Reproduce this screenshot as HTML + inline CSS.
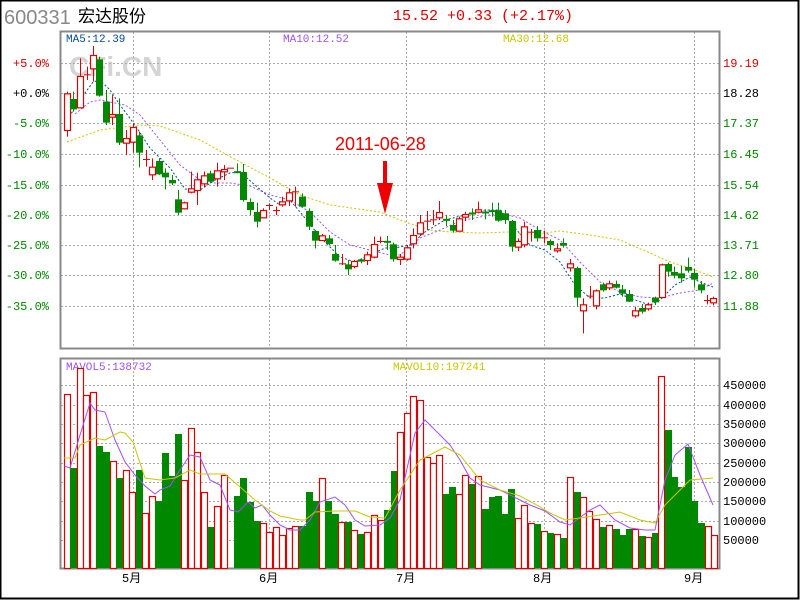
<!DOCTYPE html>
<html><head><meta charset="utf-8">
<style>
body{margin:0;background:#fff;width:800px;height:600px;overflow:hidden}
svg{display:block}
text{font-family:"Liberation Mono","WenQuanYi Zen Hei",monospace}
</style></head><body>
<svg id="s" width="800" height="600" xmlns="http://www.w3.org/2000/svg">
<rect x="0.5" y="0.5" width="798" height="598" fill="#fff" stroke="#000" stroke-width="2"/>
<text x="4" y="24" font-size="20" fill="#888" style="font-family:'Liberation Sans',sans-serif">600331</text>
<text x="78" y="22" font-size="17" fill="#000" style="font-family:'Liberation Sans','WenQuanYi Zen Hei',sans-serif">宏达股份</text>
<text x="393" y="20" font-size="15" fill="#d00">15.52 +0.33 (+2.17%)</text>
<text x="69" y="76" font-size="28" font-weight="bold" fill="#d4d4d4" style="font-family:'Liberation Sans',sans-serif">CFi.CN</text>
<g id="grid" stroke="#aaa" stroke-dasharray="2,2" stroke-width="1"></g>
<rect x="60.5" y="31.5" width="659" height="317" fill="none" stroke="#888" stroke-width="2"/>
<rect x="60.5" y="358.5" width="659" height="210" fill="none" stroke="#888" stroke-width="2"/>
<text x="66" y="42" font-size="11" fill="#004c99">MA5:12.39</text>
<text x="283" y="42" font-size="11" fill="#a050ff">MA10:12.52</text>
<text x="503" y="42" font-size="11" fill="#c8c800">MA30:12.68</text>
<text x="66" y="370" font-size="11" fill="#a050ff">MAVOL5:138732</text>
<text x="393" y="370" font-size="11" fill="#c8c800">MAVOL10:197241</text>
<g id="lab" font-size="12"></g>
<g id="lines" fill="none"></g>
<g id="c"></g>
<text x="335" y="150" font-size="18" fill="#e00" style="font-family:'Liberation Sans',sans-serif">2011-06-28</text>
<rect x="383" y="161" width="4" height="28" fill="#e00"/>
<polygon points="377,183 393,183 385,214" fill="#e00"/>
</svg>
<script>
var S=document.getElementById('s'),NS='http://www.w3.org/2000/svg';
function el(p,t,a,tx){var e=document.createElementNS(NS,t);for(var k in a)e.setAttribute(k,a[k]);if(tx)e.textContent=tx;document.getElementById(p).appendChild(e);}
[63,93,123,154,185,215,245,275,306].forEach(function(y){el('grid','line',{x1:61,x2:719,y1:y+.5,y2:y+.5});});
[385,405,424,443,463,482,501,521,540].forEach(function(y){el('grid','line',{x1:61,x2:719,y1:y+.5,y2:y+.5});});
[133,269,406,544,694].forEach(function(x){el('grid','line',{x1:x+.5,x2:x+.5,y1:32,y2:348});el('grid','line',{x1:x+.5,x2:x+.5,y1:359,y2:568});});
var pl=['+5.0%','+0.0%','-5.0%','-10.0%','-15.0%','-20.0%','-25.0%','-30.0%','-35.0%'],pr=['19.19','18.28','17.37','16.45','15.54','14.62','13.71','12.80','11.88'],py=[63,93,123,154,185,215,245,275,306];
for(var i=0;i<9;i++){var col=i==0?'#d00':i==1?'#000':'#080';el('lab','text',{x:49,y:py[i]+4,'text-anchor':'end',fill:col},pl[i]);el('lab','text',{x:723,y:py[i]+4,fill:col},pr[i]);}
var vl=['450000','400000','350000','300000','250000','200000','150000','100000','50000'],vy=[385,405,424,443,463,482,501,521,540];
for(i=0;i<9;i++)el('lab','text',{x:723,y:vy[i]+4,fill:'#000'},vl[i]);
[['5月',122],['6月',259],['7月',396],['8月',533],['9月',684]].forEach(function(m){el('lab','text',{x:m[1],y:582,fill:'#000'},m[0]);});
function pl_(pts,c,d){el('lines','polyline',{points:pts.map(function(p){return p.join(',')}).join(' '),stroke:c,'stroke-width':1,'stroke-dasharray':d||'none'});}
pl_([[67,142],[100,130],[140,125],[160,126],[200,140],[240,162],[270,178],[300,195],[330,205],[380,212],[405,222],[430,230],[450,232],[480,233],[510,232],[530,235],[560,231],[590,235],[620,240],[650,253],[670,262],[690,268],[713,277]],'#c8c800','2,2');
pl_([[75,114],[90,102],[100,100],[125,105],[140,115],[160,140],[180,165],[200,180],[215,183],[230,183],[250,186],[270,195],[290,200],[310,212],[330,232],[350,245],[370,250],[390,255],[400,255],[420,238],[440,230],[460,221],[480,217],[500,213],[520,218],[540,230],[560,240],[580,262],[600,282],[620,292],[640,297],[660,298],[680,293],[700,290],[713,283]],'#a050ff','2,2');
pl_([[67,120],[80,100],[93,82],[100,80],[110,90],[120,105],[135,125],[150,148],[170,168],[185,189],[200,190],[215,180],[230,173],[240,172],[255,185],[270,198],[280,205],[290,200],[305,218],[320,237],[340,257],[355,262],[370,255],[385,248],[395,248],[410,245],[425,232],[445,220],[465,215],[485,210],[500,210],[515,228],[530,245],[545,250],[560,262],[575,285],[590,298],[605,298],[620,294],[635,300],[650,305],[660,300],[675,285],[690,277],[700,282],[713,287]],'#004c99','2,2');
var A=[[20,190,300,185,320,'r'],[40,207,238,185,245,'g'],[60,138,232,85,235,'r'],[80,133,133,110,150,'r'],[98,75,115,48,155,'r'],[118,88,197,80,200,'g'],[138,215,278,180,285,'g'],[157,252,260,195,285,'r'],[178,252,338,205,345,'g'],[198,324,338,300,375,'r'],[218,291,335,280,368,'r'],[236,316,368,305,412,'g'],[257,387,387,360,410,'r'],[276,410,433,385,450,'r'],[296,393,433,385,435,'g'],[315,428,442,415,478,'g'],[335,450,460,435,465,'g'],[354,508,548,480,555,'g'],[373,517,535,515,538,'r'],[393,475,485,425,490,'r'],[412,448,480,428,525,'r'],[432,436,460,425,470,'r'],[451,430,455,422,460,'g'],[472,421,445,398,470,'r'],[491,417,424,405,450,'r'],[511,413,413,413,413,'r'],[531,425,428,400,430,'g'],[550,426,510,402,515,'g'],[570,516,540,505,555,'g'],[590,546,575,518,592,'g'],[608,540,562,535,565,'r'],[628,525,530,520,540,'r'],[648,540,544,530,555,'r'],[667,514,523,500,530,'r'],[687,487,511,475,528,'r'],[706,484,484,470,530,'r'],[726,500,530,490,532,'g'],[746,543,590,535,600,'g'],[766,603,632,600,655,'g'],[786,616,630,612,632,'r'],[806,625,642,615,645,'g'],[825,672,692,645,695,'g'],[845,700,700,672,705,'r'],[864,703,718,690,735,'g'],[883,693,708,690,715,'r'],[902,688,695,685,700,'g'],[922,673,690,665,705,'r'],[941,642,680,620,685,'r'],[961,633,638,620,640,'r']];
var B=[[20,274,277,258,300,'g'],[40,283,328,278,335,'g'],[60,320,327,312,345,'r'],[80,292,326,285,332,'r'],[100,255,280,235,295,'r'],[120,217,250,195,258,'r'],[140,212,212,183,240,'r'],[160,208,208,180,225,'r'],[178,186,202,153,210,'r'],[198,208,213,195,228,'g'],[218,225,242,210,248,'g'],[236,205,242,200,244,'r'],[256,192,200,185,213,'r'],[276,189,191,175,210,'g'],[295,178,185,155,190,'r'],[315,186,190,178,208,'g'],[335,182,185,158,200,'g'],[355,181,212,158,215,'g'],[374,190,210,180,222,'g'],[395,213,290,210,305,'g'],[413,273,290,265,303,'r'],[433,229,283,215,292,'r'],[452,245,245,237,275,'r'],[472,240,265,228,275,'g'],[492,262,262,242,280,'r'],[511,273,285,268,300,'g'],[530,295,301,280,308,'r'],[550,279,287,265,293,'g'],[570,340,352,327,365,'r'],[590,354,443,350,470,'g'],[610,463,481,445,550,'r'],[630,437,437,408,445,'r'],[648,421,466,418,478,'r'],[668,403,421,398,425,'g'],[688,400,412,392,420,'r'],[707,402,413,392,415,'g'],[727,418,431,405,440,'g'],[747,432,455,420,456,'g'],[766,481,496,470,503,'r'],[786,474,485,462,491,'g'],[805,463,475,458,482,'r'],[825,443,457,440,465,'g'],[845,343,441,341,443,'r'],[863,342,365,338,380,'g'],[883,366,377,350,385,'g'],[903,370,385,348,398,'g'],[923,351,362,323,368,'g'],[943,369,389,357,413,'g'],[962,403,421,393,430,'g'],[982,450,450,435,463,'r'],[1000,444,457,440,466,'r']];
function cand(x,t,b,h,l,c){var col=c=='r'?'#d00':'#080';x=Math.round(x);
 el('c','line',{x1:x+.5,x2:x+.5,y1:h,y2:l,stroke:col,'stroke-width':1});
 if(b-t<2){el('c','line',{x1:x-3,x2:x+4,y1:t+.5,y2:t+.5,stroke:col,'stroke-width':c=='r'?1:2});return;}
 if(c=='r')el('c','rect',{x:x-2.5,y:t+.5,width:6,height:b-t,fill:'#fff',stroke:col,'stroke-width':1.2});
 else el('c','rect',{x:x-3,y:t,width:7,height:b-t,fill:col});}
A.forEach(function(a){cand(a[0]/3+60,a[1]/3+30,a[2]/3+30,a[3]/3+30,a[4]/3+30,a[5]);});
B.forEach(function(a){cand(a[0]/3+380,a[1]/3+150,a[2]/3+150,a[3]/3+150,a[4]/3+150,a[5]);});
var V=[[67,394,'r'],[73,468,'g'],[80,368,'r'],[86,395,'r'],[93,392,'r'],[99,446,'g'],[106,452,'g'],[113,461,'r'],[119,478,'g'],[126,470,'r'],[132,492,'r'],[139,470,'g'],[145,513,'r'],[152,496,'r'],[158,501,'g'],[165,453,'g'],[171,476,'g'],[178,434,'g'],[184,480,'r'],[191,428,'r'],[197,452,'r'],[204,492,'r'],[211,527,'g'],[217,506,'r'],[224,475,'r'],[237,496,'g'],[243,478,'g'],[250,502,'g'],[257,521,'g'],[263,523,'r'],[269,532,'r'],[276,527,'r'],[282,535,'r'],[289,528,'r'],[295,526,'r'],[302,526,'g'],[309,492,'g'],[315,501,'g'],[322,478,'r'],[328,501,'g'],[335,514,'g'],[341,522,'r'],[348,522,'g'],[354,530,'r'],[361,534,'g'],[367,532,'r'],[374,515,'r'],[381,520,'r'],[387,510,'g'],[394,471,'g'],[400,432,'r'],[407,413,'r'],[413,396,'r'],[420,400,'r'],[427,457,'r'],[433,463,'r'],[439,455,'r'],[446,494,'g'],[452,487,'g'],[459,494,'r'],[465,475,'r'],[472,484,'g'],[478,476,'r'],[485,509,'g'],[492,497,'g'],[498,496,'g'],[505,514,'g'],[511,489,'g'],[518,518,'r'],[524,505,'r'],[531,523,'r'],[537,524,'g'],[544,531,'r'],[550,533,'g'],[557,534,'r'],[563,538,'g'],[570,477,'r'],[577,492,'g'],[583,497,'r'],[589,511,'r'],[596,519,'r'],[603,527,'g'],[609,525,'r'],[616,529,'g'],[622,535,'g'],[629,529,'g'],[635,529,'r'],[642,536,'g'],[648,537,'r'],[655,533,'g'],[661,376,'r'],[668,430,'g'],[674,477,'g'],[681,487,'g'],[688,447,'g'],[694,501,'g'],[701,523,'g'],[708,526,'r'],[714,535,'r']];
V.forEach(function(v){var x=v[0];if(v[2]=='r')el('c','rect',{x:x-2.5,y:v[1]+.5,width:6,height:568-v[1],fill:'#fff',stroke:'#d00','stroke-width':1.2});else el('c','rect',{x:x-3,y:v[1],width:7,height:568-v[1],fill:'#080'});});
function vl_(pts,c){el('c','polyline',{points:pts.map(function(p){return p.join(',')}).join(' '),stroke:c,fill:'none','stroke-width':1});}
vl_([[64,466],[70,468],[80,435],[90,403],[95,410],[105,412],[115,440],[125,462],[135,475],[145,486],[155,494],[160,490],[170,486],[180,470],[190,455],[200,457],[210,480],[220,485],[230,510],[238,512],[248,502],[255,508],[262,505],[270,515],[280,525],[290,530],[300,530],[310,520],[320,502],[335,497],[345,505],[355,520],[365,526],[380,525],[390,518],[400,500],[415,433],[425,420],[440,435],[450,445],[460,460],[470,478],[480,485],[500,490],[520,500],[530,505],[545,511],[560,522],[570,525],[590,510],[600,505],[615,520],[630,528],[645,530],[655,530],[665,480],[675,455],[688,444],[700,475],[713,505]],'#a050ff');
vl_([[64,458],[75,458],[80,445],[95,438],[105,440],[120,432],[125,433],[133,442],[145,478],[160,480],[175,478],[190,470],[200,474],[215,474],[225,474],[240,487],[255,500],[270,511],[280,516],[290,518],[300,520],[305,520],[315,512],[335,511],[355,511],[370,517],[385,518],[400,490],[420,460],[445,447],[460,455],[480,480],[500,490],[520,496],[535,504],[550,513],[565,520],[580,518],[600,515],[620,512],[640,520],[655,523],[665,505],[675,495],[690,480],[713,478]],'#c8c800');
</script>
</body></html>
